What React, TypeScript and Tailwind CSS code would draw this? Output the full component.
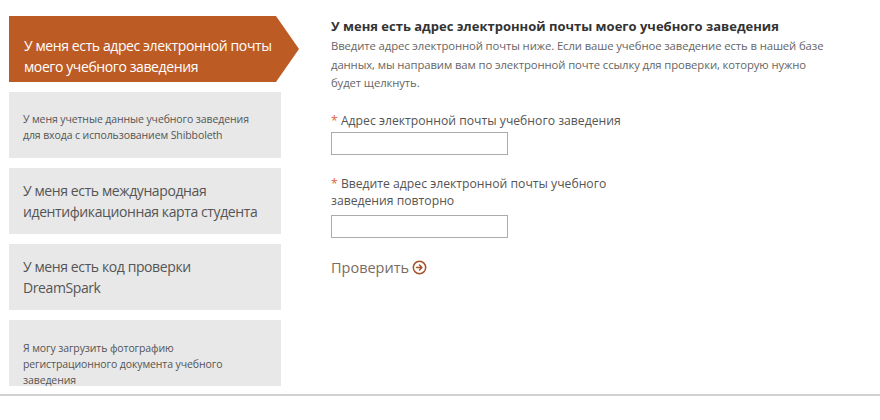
import React from 'react';

const font = { fontFamily: '"Open Sans", "Noto Sans", Arial, sans-serif' };

interface Option {
  id: string;
  title: string;
  small?: boolean;
  box: string;
}

const options: Option[] = [
  {
    id: 'shib',
    title: 'У меня учетные данные учебного заведения для входа с использованием Shibboleth',
    small: true,
    box: 'pt-[19px]',
  },
  {
    id: 'isic',
    title: 'У меня есть международная идентификационная карта студента',
    box: 'flex items-center',
  },
  {
    id: 'code',
    title: 'У меня есть код проверки DreamSpark',
    box: 'flex items-center',
  },
  {
    id: 'upload',
    title: 'Я могу загрузить фотографию регистрационного документа учебного заведения',
    small: true,
    box: 'pt-[20px]',
  },
];

const CircleArrow = () => (
  <svg width="15" height="15" viewBox="0 0 16 16" fill="none" className="ml-[3px]">
    <circle cx="8" cy="8" r="6.6" stroke="#a4532c" strokeWidth="1.6" />
    <path d="M4.8 8h5.6M8 5.4 10.6 8 8 10.6" stroke="#a4532c" strokeWidth="1.6" strokeLinecap="round" strokeLinejoin="round" />
  </svg>
);

export default function App() {
  return (
    <div className="w-[880px] h-[420px] bg-white overflow-hidden" style={font}>
      <div className="flex border-b-2 border-[#d2d2d2] h-[396px]">
        {/* Verification methods */}
        <div className="w-[331px] shrink-0 pl-[9px] pt-[16px] flex flex-col gap-[10px]">
          <div className="w-[290px] h-[66px] bg-[#bd5b24] text-white text-[14px] tracking-[-0.4px] leading-[21px] pl-[15px] pr-[24px] pt-[19px] [clip-path:polygon(0_0,267px_0,290px_50%,267px_100%,0_100%)]">
            У меня есть адрес электронной почты моего учебного заведения
          </div>
          {options.map(o => (
            <div
              key={o.id}
              className={`w-[272px] h-[66px] bg-[#e8e8e8] text-[#555] pl-[14px] pr-[12px] overflow-hidden ${o.box} ${
                o.small
                  ? 'text-[10.5px] tracking-[-0.1px] leading-[16px]'
                  : 'text-[14px] tracking-[-0.4px] leading-[21px]'
              }`}
            >
              <span>{o.title}</span>
            </div>
          ))}
        </div>

        {/* Email form */}
        <div className="w-[530px] pt-[16px]">
          <h2 className="text-[13px] leading-[20px] font-bold text-[#333]">
            У меня есть адрес электронной почты моего учебного заведения
          </h2>
          <p className="mt-[1px] text-[11.3px] leading-[18.5px] tracking-[-0.1px] text-[#666] whitespace-nowrap">
            Введите адрес электронной почты ниже. Если ваше учебное заведение есть в нашей базе
            <br />
            данных, мы направим вам по электронной почте ссылку для проверки, которую нужно
            <br />
            будет щелкнуть.
          </p>

          <label className="block mt-[19px] text-[12.2px] leading-[17px] text-[#555]">
            <span className="text-[#e2663c]">*</span> Адрес электронной почты учебного заведения
          </label>
          <input className="block mt-[3px] w-[177px] h-[23px] border border-[#ababab] bg-white outline-none" />

          <label className="block mt-[20px] text-[12.2px] leading-[17px] text-[#555]">
            <span className="text-[#e2663c]">*</span> Введите адрес электронной почты учебного
            <br />
            заведения повторно
          </label>
          <input className="block mt-[6px] w-[177px] h-[23px] border border-[#ababab] bg-white outline-none" />

          <button className="mt-[20px] flex items-center text-[14.5px] leading-[20px] text-[#7a6c62]">
            Проверить
            <CircleArrow />
          </button>
        </div>
      </div>
    </div>
  );
}
